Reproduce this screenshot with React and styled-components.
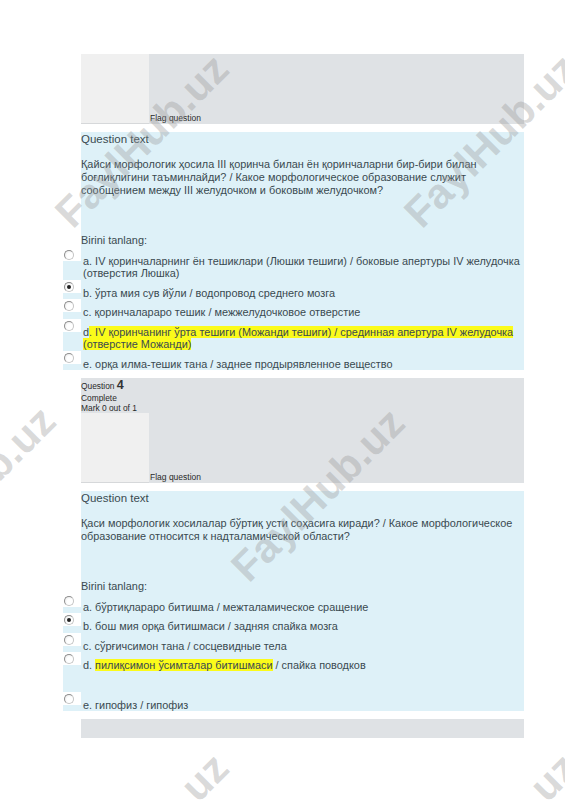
import React from 'react';
import styled, { createGlobalStyle } from 'styled-components';

const Global = createGlobalStyle`
  html, body { margin: 0; padding: 0; background: #ffffff; }
  body { font-family: "Liberation Sans", Arial, sans-serif; }
`;

const Page = styled.div`
  position: relative;
  width: 565px;
  height: 800px;
  overflow: hidden;
  box-sizing: border-box;
  padding: 54px 41px 0 81px;
`;

const Column = styled.div`
  display: flex;
  flex-direction: column;
  gap: 8px;
`;

const InfoBox = styled.div`
  background: #dfe2e5;
  color: #2a2a2a;
  min-height: ${p => p.$min || 0}px;
`;

const InfoLine = styled.div`
  font-size: 8.4px;
  line-height: ${p => p.$lh || 10}px;
`;

const QNum = styled.span`
  font-size: 12.5px;
  font-weight: bold;
  color: #333;
`;

const FlagRow = styled.div`
  display: flex;
  align-items: flex-end;
`;

const FlagImage = styled.div`
  width: 68px;
  height: 69px;
  background: #f0f0f0;
  border-bottom: 1px solid #d6d8da;
`;

const FlagText = styled.span`
  font-size: 8.5px;
  line-height: 10px;
  margin-left: 1px;
  margin-bottom: 1px;
`;

const Formulation = styled.div`
  background: #def1f8;
  color: #3a4a50;
  font-size: 10.9px;
`;

const Heading = styled.div`
  font-size: 11.5px;
  line-height: 14px;
`;

const QText = styled.p`
  margin: 11.5px 0 0;
  line-height: 13.3px;
`;

const Prompt = styled.div`
  margin-top: 37px;
  line-height: 13.3px;
`;

const Answers = styled.div`
  margin-left: -18px;
  display: flex;
  flex-direction: column;
`;

const Option = styled.div`
  display: flex;
  align-items: flex-start;
  background: #def1f8;
  padding-bottom: ${p => (p.$extra ? 20 : 0)}px;
`;

const RadioCell = styled.span`
  flex: 0 0 18px;
  height: 13px;
  background: #ffffff;
`;

const Radio = styled.span`
  position: relative;
  display: block;
  width: 8px;
  height: 8px;
  margin: 2px 0 0 1px;
  border-radius: 50%;
  border: 1px solid #8d8d8d;
  border-right-color: #c4c4c4;
  border-bottom-color: #c4c4c4;
  background: radial-gradient(circle at 60% 60%, #ffffff 40%, #e2e2e2 100%);
  &::after {
    content: '';
    display: ${p => (p.$checked ? 'block' : 'none')};
    position: absolute;
    left: 2px;
    top: 2px;
    width: 4px;
    height: 4px;
    border-radius: 50%;
    background: #222;
  }
`;

const Label = styled.span`
  flex: 1;
  padding: 7px 0 0 2px;
  line-height: 12.5px;
`;

const Hl = styled.span`
  background: #fbfb1a;
`;

const Watermarks = styled.div`
  position: absolute;
  inset: 0;
  pointer-events: none;
`;

const Mark = styled.span`
  position: absolute;
  transform: translate(-50%, -50%) rotate(-45deg);
  font-family: "Liberation Sans", Arial, sans-serif;
  font-weight: bold;
  font-size: 42px;
  white-space: nowrap;
  color: rgba(150, 150, 150, 0.36);
`;

const marks = [
  [142, 141],
  [491, 141],
  [-31, 493],
  [318, 495],
  [142, 840],
  [491, 840],
];

const q3Options = [
  { k: 'a', text: 'a. IV қоринчаларнинг ён тешиклари (Люшки тешиги) / боковые апертуры IV желудочка (отверстия Люшка)' },
  { k: 'b', text: 'b. ўрта мия сув йўли / водопровод среднего мозга', checked: true },
  { k: 'c', text: 'c. қоринчалараро тешик / межжелудочковое отверстие' },
  {
    k: 'd',
    node: (
      <>
        d<Hl>. IV қоринчанинг ўрта тешиги (Можанди тешиги) / срединная апертура IV желудочка (отверстие Можанди)</Hl>
      </>
    ),
  },
  { k: 'e', text: 'e. орқа илма-тешик тана / заднее продырявленное вещество' },
];

const q4Options = [
  { k: 'a', text: 'a. бўртиқлараро битишма / межталамическое сращение' },
  { k: 'b', text: 'b. бош мия орқа битишмаси / задняя спайка мозга', checked: true },
  { k: 'c', text: 'c. сўрғичсимон тана / сосцевидные тела' },
  {
    k: 'd',
    extra: true,
    node: (
      <>
        d. <Hl>пилиқсимон ўсимталар битишмаси</Hl> / спайка поводков
      </>
    ),
  },
  { k: 'e', text: 'e. гипофиз / гипофиз' },
];

function Flag() {
  return (
    <FlagRow>
      <FlagImage />
      <FlagText>Flag question</FlagText>
    </FlagRow>
  );
}

function Question({ text, options }) {
  return (
    <Formulation>
      <Heading>Question text</Heading>
      <QText>{text}</QText>
      <Prompt>Birini tanlang:</Prompt>
      <Answers>
        {options.map(o => (
          <Option key={o.k} $extra={o.extra}>
            <RadioCell>
              <Radio $checked={o.checked} />
            </RadioCell>
            <Label>{o.node || o.text}</Label>
          </Option>
        ))}
      </Answers>
    </Formulation>
  );
}

export default function App() {
  return (
    <>
      <Global />
      <Page>
        <Column>
          <InfoBox>
            <Flag />
          </InfoBox>
          <Question
            text="Қайси морфологик ҳосила III қоринча билан ён қоринчаларни бир-бири билан боғлиқлигини таъминлайди? / Какое морфологическое образование служит сообщением между III желудочком и боковым желудочком?"
            options={q3Options}
          />
          <InfoBox>
            <InfoLine $lh={14}>
              Question <QNum>4</QNum>
            </InfoLine>
            <InfoLine>Complete</InfoLine>
            <InfoLine>Mark 0 out of 1</InfoLine>
            <Flag />
          </InfoBox>
          <Question
            text="Қаси морфологик хосилалар бўртиқ усти соҳасига киради? / Какое морфологическое образование относится к надталамической области?"
            options={q4Options}
          />
          <InfoBox $min={19} />
        </Column>
        <Watermarks>
          {marks.map(([x, y], i) => (
            <Mark key={i} style={{ left: x, top: y }}>
              FaylHub.uz
            </Mark>
          ))}
        </Watermarks>
      </Page>
    </>
  );
}
